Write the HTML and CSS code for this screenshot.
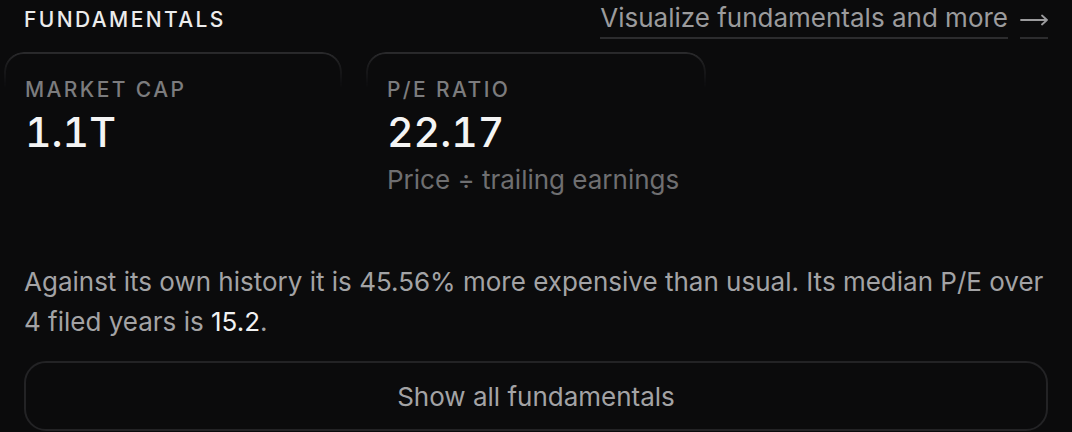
FILE: index.html
```html
<!DOCTYPE html>
<html>
<head>
<meta charset="utf-8">
<link rel="stylesheet" href="styles.css">
</head>
<body>
<section class="panel">
  <header class="head">
    <h2 class="title">FUNDAMENTALS</h2>
    <a class="link" href="#"><span class="link-text">Visualize fundamentals and more</span><span class="link-arrow"><svg class="arrow" width="28" height="12" viewBox="0 0 28 12"><path d="M1 6H27M22 1.5L27 6L22 10.5" fill="none" stroke="currentColor" stroke-width="1.8" stroke-linecap="round" stroke-linejoin="round"/></svg></span></a>
  </header>
  <div class="cards">
    <div class="card card-a">
      <div class="label">MARKET CAP</div>
      <div class="value">1.1T</div>
    </div>
    <div class="card card-b">
      <div class="label">P/E RATIO</div>
      <div class="value">22.17</div>
      <div class="sub">Price ÷ trailing earnings</div>
    </div>
  </div>
  <p class="note">Against its own history it is 45.56% more expensive than usual. Its median P/E over 4 filed years is <span class="hl">15.2</span>.</p>
  <button class="more">Show all fundamentals</button>
</section>
</body>
</html>
```
FILE: styles.css
```css
html, body {
  margin: 0;
  padding: 0;
  background: #0b0b0c;
  width: 1072px;
  height: 432px;
  overflow: hidden;
  font-family: Inter, "Noto Sans", sans-serif;
}
.panel {
  padding: 0 24px;
  width: 1024px;
}
.head {
  display: flex;
  justify-content: space-between;
  align-items: flex-start;
  height: 52px;
}
.title {
  margin: 0;
  padding-top: 7px;
  font-size: 21px;
  font-weight: 500;
  letter-spacing: 2.4px;
  color: #ececec;
  line-height: 26px;
}
.link {
  display: flex;
  gap: 12px;
  text-decoration: none;
  color: #9b9b9d;
  font-size: 26px;
  line-height: 31px;
  padding-top: 2px;
}
.link-text, .link-arrow {
  border-bottom: 2px solid #2c2c2e;
  padding-bottom: 2px;
}
.link-arrow {
  display: flex;
  align-items: center;
  width: 28px;
  height: 31px;
  padding-top: 2px;
  box-sizing: content-box;
}
.arrow {
  display: block;
}
.cards {
  display: flex;
  gap: 24px;
  margin-left: -20px;
}
.card {
  position: relative;
  padding: 24px 21px 0 21px;
  height: 166px;
  box-sizing: border-box;
}
.card::before {
  content: "";
  position: absolute;
  inset: 0;
  border: 2px solid #2b2b2d;
  border-radius: 20px;
  -webkit-mask-image: linear-gradient(to bottom, #000 0, rgba(0,0,0,0.6) 10px, transparent 36px);
  mask-image: linear-gradient(to bottom, #000 0, rgba(0,0,0,0.6) 10px, transparent 36px);
  pointer-events: none;
}
.card-a { width: 338px; }
.card-b { width: 340px; }
.label {
  font-size: 21px;
  letter-spacing: 2.4px;
  color: #7c7c7e;
  font-weight: 500;
  line-height: 28px;
}
.value {
  font-size: 41px;
  font-weight: 500;
  color: #f4f4f4;
  line-height: 48px;
  margin-top: 4px;
  font-feature-settings: "tnum" 1;
  font-variant-numeric: tabular-nums;
}
.sub {
  font-size: 26px;
  color: #6f6f71;
  line-height: 32px;
  margin-top: 8px;
}
.note {
  margin: 0;
  font-size: 26px;
  line-height: 40px;
  color: #a3a3a5;
  padding-top: 44px;
}
.hl { color: #f2f2f2; }
.more {
  display: block;
  width: 1024px;
  height: 70px;
  margin-top: 19px;
  background: transparent;
  border: 2px solid #232325;
  border-radius: 22px;
  color: #a3a3a5;
  font-family: Inter, "Noto Sans", sans-serif;
  font-size: 26px;
  cursor: pointer;
}
```
